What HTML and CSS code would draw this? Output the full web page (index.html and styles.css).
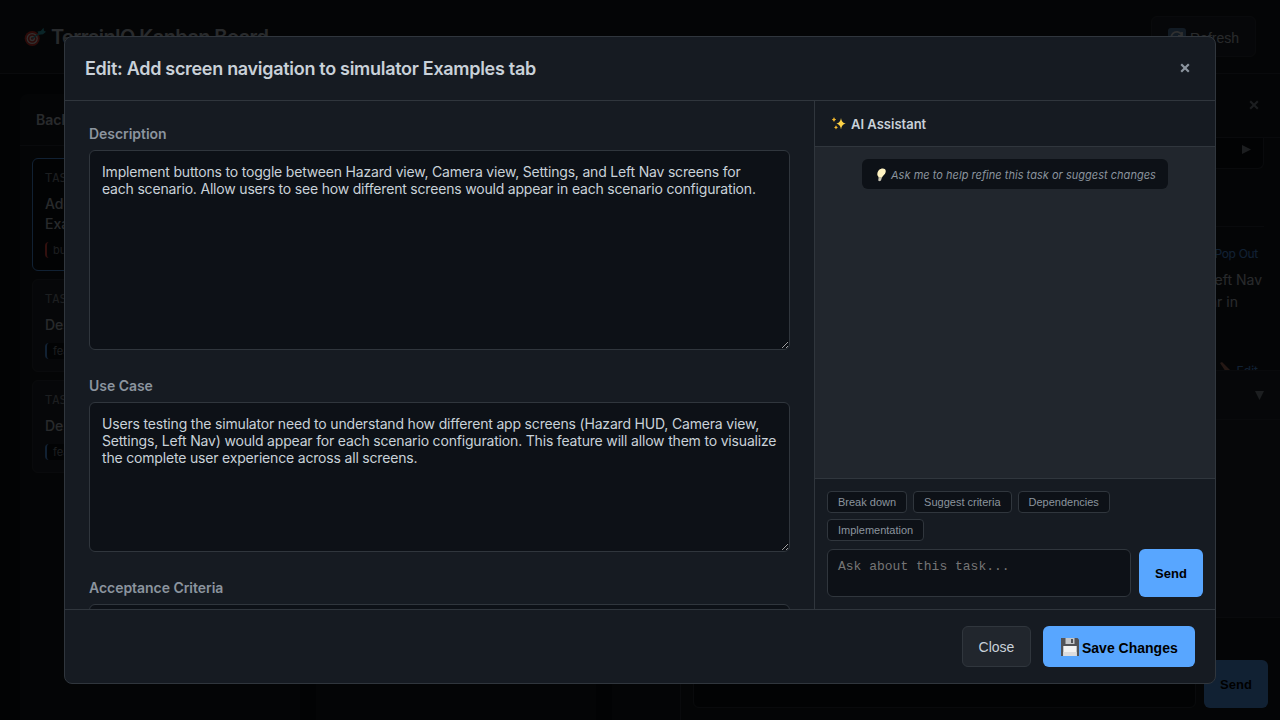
FILE: index.html
```html
<!DOCTYPE html>
<html lang="en">
<head>
<meta charset="utf-8">
<title>TerrainIQ Kanban Board</title>
<link rel="stylesheet" href="styles.css">
</head>
<body>
<div class="app">
  <header class="topbar">
    <h1 class="brand">
      <svg class="brand-icon" viewBox="0 0 22 20"><circle cx="8.200" cy="11.500" r="7.500" fill="#e0392f"/><circle cx="8.200" cy="11.500" r="5.600" fill="#eee"/><circle cx="8.200" cy="11.500" r="4.300" fill="#d9362d"/><circle cx="8.200" cy="11.500" r="2.700" fill="#eee"/><circle cx="8.200" cy="11.500" r="1.300" fill="#d9362d"/><path d="M8.200 11.500 16 6" stroke="#35a8b5" stroke-width="1.500"/><path d="m13.500 4.500 3.300-.4L19.500.8l.5 3 2 1-3 2.400-4 .5z" fill="#32b5c0"/></svg>
      <span>TerrainIQ Kanban Board</span>
    </h1>
    <button class="refresh">
      <svg width="18" height="18" viewBox="0 0 18 18"><rect width="18" height="18" rx="3" fill="#5d87b3"/><path d="M13.500 6.500A5.500 5.500 0 1 0 14 11M14 4v4h-4" fill="none" stroke="#eee" stroke-width="1.800"/></svg>
      <span>Refresh</span>
    </button>
  </header>
  <main class="workspace">
    <div class="board">
      <section class="column">
        <h2 class="column-title">Backlog</h2>
        <div class="cards">
          <article class="card selected"><div class="task-id">TASK-001</div><div class="task-title">Add screen navigation to simulator<br>Examples tab</div><span class="tag bug">bug</span></article>
          <article class="card"><div class="task-id">TASK-002</div><div class="task-title">Design icon set</div><span class="tag">feature</span></article>
          <article class="card"><div class="task-id">TASK-003</div><div class="task-title">Design map view</div><span class="tag">feature</span></article>
        </div>
      </section>
      <section class="column"></section>
      <section class="column"></section>
    </div>
    <aside class="detail">
      <div class="detail-head"><svg width="10" height="10" viewBox="0 0 10 10"><path d="m1.200 1.200 7.600 7.600m0-7.600-7.600 7.600" fill="none" stroke="#8b949e" stroke-width="2"/></svg></div>
      <div class="detail-body">
        <div class="detail-select"><svg width="9" height="9" viewBox="0 0 9 9"><path d="M0 0 9 4.500 0 9z" fill="#8b949e"/></svg></div>
        <div class="detail-gap"></div>
        <div class="popout">Pop Out</div>
        <p class="detail-text">for Hazard, Camera, Settings, and Left Nav<br><span class="second-line">screens would appear in</span></p>
        <div class="edit"><svg width="12" height="12" viewBox="0 0 12 12"><path d="m1 1 2-1 8 8-1 3-3-1z" fill="#b77967"/></svg><span>Edit</span></div>
      </div>
      <div class="chat-head"><svg width="9" height="9" viewBox="0 0 9 9"><path d="M0 0h9L4.500 9z" fill="#8b949e"/></svg></div>
      <div class="chat-log"></div>
      <div class="chat-entry"><div class="chat-input"></div><button class="send">Send</button></div>
    </aside>
  </main>
</div>

<div class="overlay">
  <div class="modal">
    <header class="modal-head">
      <h2 class="modal-title">Edit: Add screen navigation to simulator Examples tab</h2>
      <button class="dismiss" aria-label="Dismiss"><svg width="10" height="10" viewBox="0 0 10 10"><path d="m1.200 1.200 7.600 7.600m0-7.600-7.600 7.600" fill="none" stroke="currentColor" stroke-width="2.200"/></svg></button>
    </header>
    <div class="modal-body">
      <form class="fields">
        <label class="label" for="description">Description</label>
        <textarea class="area description" id="description">Implement buttons to toggle between Hazard view, Camera view, Settings, and Left Nav screens for
each scenario. Allow users to see how different screens would appear in each scenario configuration.</textarea>
        <label class="label" for="usecase">Use Case</label>
        <textarea class="area usecase" id="usecase">Users testing the simulator need to understand how different app screens (Hazard HUD, Camera view,
Settings, Left Nav) would appear for each scenario configuration. This feature will allow them to visualize
the complete user experience across all screens.</textarea>
        <label class="label" for="criteria">Acceptance Criteria</label>
        <textarea class="area criteria" id="criteria"></textarea>
      </form>
      <section class="assistant">
        <h3 class="assistant-head">
          <svg width="16" height="16" viewBox="0 0 16 16"><path d="M10 2q.5 4.700 4.700 5.600Q10.500 8.700 10 13.500 9.500 8.700 5.300 7.600 9.500 6.700 10 2Z" fill="#fdd247"/><path d="M3 1q.4 2 2.200 2.500Q3.400 4 3 6 2.600 4 .8 3.500 2.600 3 3 1ZM5 9.300q.3 1.600 1.900 2.100Q5.300 12 5 13.600 4.700 12 3.100 11.400 4.700 10.900 5 9.300Z" fill="#f5b92e"/></svg>
          <span>AI Assistant</span>
        </h3>
        <div class="messages"><div class="hint"><svg width="11" height="14" viewBox="0 0 11 14"><path d="M1.300 6.200C1.600 2.600 4 .5 6.900.6c3 .2 3.600 2.900 2.100 5.100C7.900 7.300 6.400 8 5.900 9.700H2.600C2.700 8.300 1.100 7.700 1.300 6.200Z" fill="#fff3c2"/><path d="M2.600 9.800h3.200l-.8 2.700-1.500.8-1.300-.7z" fill="#c9c5b5"/></svg><em>Ask me to help refine this task or suggest changes</em></div></div>
        <div class="composer">
          <div class="chips"><button class="chip">Break down</button><button class="chip">Suggest criteria</button><button class="chip">Dependencies</button><button class="chip">Implementation</button></div>
          <div class="entry"><textarea class="prompt" placeholder="Ask about this task..."></textarea><button class="send">Send</button></div>
        </div>
      </section>
    </div>
    <footer class="modal-foot">
      <button class="close">Close</button>
      <button class="save"><svg width="18" height="18" viewBox="0 0 18 18"><path d="M0 0h16.500L18 1.500V18H0z" fill="#525357"/><path d="M4.500 0h9v6h-9z" fill="#c4c6c9"/><path d="M10 1h2v4h-2z" fill="#505155"/><path d="M2.300 8h13.400v10H2.300z" fill="#f3f3f3"/><path d="M2.300 14h13.400v4H2.300z" fill="#dddddf"/></svg><span>Save Changes</span></button>
    </footer>
  </div>
</div>
</body>
</html>
```
FILE: styles.css
```css
* { box-sizing: border-box; }
body { margin: 0; height: 720px; overflow: hidden; background: #0d1117; color: #c9d1d9; font-family: Inter, sans-serif; }
button, textarea { font-family: "Liberation Sans", Arial, sans-serif; margin: 0; }
h1, h2, h3, p { margin: 0; }
svg { flex: none; }

.app { height: 720px; display: flex; flex-direction: column; overflow: hidden; }
.topbar { height: 74px; flex: none; padding: 0 24px; display: flex; align-items: center; justify-content: space-between; background: #161b22; border-bottom: 1px solid #30363d; }
.brand { display: flex; align-items: center; gap: 5px; font-size: 20px; font-weight: 600; letter-spacing: -0.6px; }
.brand-icon { width: 22px; height: 20px; }
.refresh { width: 105px; height: 41px; padding: 0; display: flex; align-items: center; justify-content: center; gap: 4px; border: 1px solid #30363d; border-radius: 6px; background: #21262d; color: #c9d1d9; font-size: 14px; }
.refresh span { padding-top: 2px; }
.workspace { flex: 1; min-height: 0; display: flex; }
.board { width: 680px; flex: none; display: flex; gap: 16px; padding: 20px 0 0 20px; overflow: hidden; }
.column { width: 280px; flex: none; background: #161b22; border-radius: 8px 8px 0 0; }
.column-title { height: 52px; padding: 16px; border-bottom: 1px solid #30363d; font-size: 14px; line-height: 20px; font-weight: 600; }
.cards { padding: 12px; display: flex; flex-direction: column; gap: 8px; }
.card { padding: 12px; border: 1px solid #30363d; border-radius: 6px; background: #21262d; }
.card.selected { border-color: #58a6ff; background: #0d1117; }
.task-id { height: 15px; margin-bottom: 8px; font: 12px/15px "DejaVu Sans Mono", monospace; color: #8b949e; }
.task-title { margin-bottom: 8px; font-size: 14px; line-height: 20px; font-weight: 500; white-space: nowrap; }
.tag { display: block; width: 54px; height: 16px; padding-left: 6px; border-left: 2px solid #58a6ff; border-radius: 4px; background: #0d1117; color: #8b949e; font-size: 11px; line-height: 16px; }
.tag.bug { border-color: #f85149; }
.detail { flex: 1; display: flex; flex-direction: column; border-left: 1px solid #30363d; background: #161b22; }
.detail-head { height: 64px; flex: none; padding: 0 21px 2px; display: flex; align-items: center; justify-content: flex-end; border-bottom: 1px solid #30363d; }
.detail-body { height: 232px; flex: none; padding: 0 16px; overflow: hidden; text-align: right; }
.detail-select { height: 31px; padding: 7px 12px; border: 1px solid #30363d; border-top: 0; border-radius: 0 0 6px 6px; background: #0d1117; line-height: 0; }
.detail-gap { height: 58px; border-bottom: 1px solid #30363d; }
.popout { margin-top: 18px; padding-right: 6px; font-size: 12px; line-height: 17px; letter-spacing: -0.3px; color: #58a6ff; }
.detail-text { margin-top: 7px; padding-right: 2px; font-size: 14px; line-height: 22px; }
.second-line { padding-right: 24px; }
.edit { margin-top: 49px; display: flex; justify-content: flex-end; gap: 6px; padding-right: 6px; color: #58a6ff; font-size: 12px; line-height: 18px; }
.chat-head { height: 50px; flex: none; padding: 20px 16px; border-top: 1px solid #30363d; border-bottom: 1px solid #30363d; background: #21262d; text-align: right; line-height: 0; }
.chat-log { flex: 1; background: #21262d; }
.chat-entry { height: 103px; flex: none; padding: 42px 12px 12px; display: flex; gap: 8px; border-top: 1px solid #30363d; }
.chat-input { flex: 1; border: 1px solid #30363d; border-radius: 6px; background: #0d1117; }

.overlay { position: absolute; inset: 0; display: flex; align-items: center; justify-content: center; background: rgba(0, 0, 0, .8); }
.modal { width: 1152px; height: 648px; display: flex; flex-direction: column; overflow: hidden; border: 1px solid #30363d; border-radius: 8px; background: #161b22; }
.modal-head { height: 64px; flex: none; padding: 0 20px; display: flex; align-items: center; justify-content: space-between; border-bottom: 1px solid #30363d; }
.modal-title { font-size: 18px; line-height: 22px; font-weight: 600; letter-spacing: -0.3px; }
.dismiss { width: 20px; height: 20px; padding: 0 0 2px; display: grid; place-items: center; border: 0; background: none; color: #8b949e; }
.modal-body { flex: 1; min-height: 0; display: flex; }
.fields { width: 749px; flex: none; padding: 24px 24px 0; overflow: hidden; display: flex; flex-direction: column; }
.label { height: 18px; flex: none; margin-bottom: 7px; font-size: 14px; line-height: 17px; font-weight: 600; letter-spacing: -0.04px; color: #8b949e; }
.area { width: 701px; flex: none; margin: 0 0 27px; padding: 12px; border: 1px solid #30363d; border-radius: 6px; background: #0d1117; color: #c9d1d9; font: 14px/17px Inter, sans-serif; resize: vertical; overflow: hidden; white-space: pre; }
.description { height: 200px; letter-spacing: -0.19px; }
.usecase { height: 150px; letter-spacing: -0.18px; }
.criteria { height: 150px; }
.assistant { flex: 1; min-width: 0; display: flex; flex-direction: column; border-left: 1px solid #30363d; }
.assistant-head { height: 46px; flex: none; display: flex; align-items: center; gap: 4px; padding: 0 16px; border-bottom: 1px solid #30363d; font-size: 13px; font-weight: 600; }
.messages { flex: 1; padding-top: 12px; background: #21262d; }
.hint { width: 306px; height: 30px; margin: 0 auto; padding: 2px 12px 0 14px; display: flex; align-items: center; gap: 4px; border-radius: 6px; background: #0d1117; color: #8b949e; font-size: 11px; letter-spacing: 0.03px; white-space: nowrap; }
.composer { height: 131px; flex: none; padding: 12px; border-top: 1px solid #30363d; }
.chips { display: flex; flex-wrap: wrap; gap: 6px; margin-bottom: 8px; }
.chip { height: 22px; padding: 0 10px; border: 1px solid #30363d; border-radius: 4px; background: #0d1117; color: #8b949e; font-size: 11px; line-height: 20px; }
.entry { display: flex; gap: 8px; }
.prompt { flex: 1; min-width: 0; height: 48px; padding: 9px 10px; border: 1px solid #30363d; border-radius: 6px; background: #0d1117; font: 13px/15px "Liberation Mono", monospace; resize: none; }
.prompt::placeholder { color: #757575; }
.send { width: 64px; height: 48px; padding: 0; border: 0; border-radius: 6px; background: #58a6ff; color: #000; font-size: 13px; font-weight: 700; }
.modal-foot { height: 74px; flex: none; padding: 16px 20px; display: flex; justify-content: flex-end; gap: 12px; border-top: 1px solid #30363d; }
.close { width: 69px; height: 41px; padding: 0; border: 1px solid #30363d; border-radius: 6px; background: #21262d; color: #c9d1d9; font-size: 14px; }
.save { width: 152px; height: 41px; padding: 0 17px 0 18px; display: flex; align-items: center; gap: 3px; border: 0; border-radius: 6px; background: #58a6ff; color: #000; font-size: 14px; font-weight: 700; white-space: nowrap; }
.save span { padding-top: 2px; }
```
